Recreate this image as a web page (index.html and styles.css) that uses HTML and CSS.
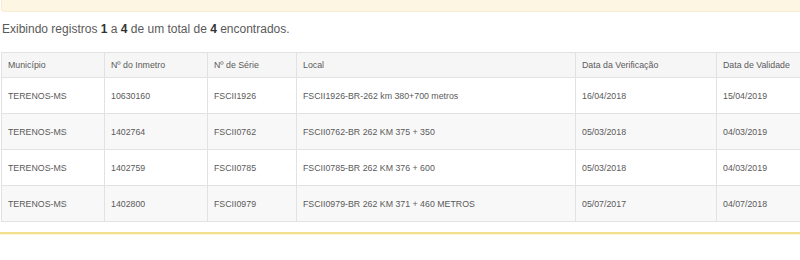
FILE: index.html
```html
<!DOCTYPE html>
<html lang="pt-BR">
<head>
<meta charset="utf-8">
<link rel="stylesheet" href="styles.css">
</head>
<body>
<div class="alert-top"></div>
<p class="summary">Exibindo registros <b>1</b> a <b>4</b> de um total de <b>4</b> encontrados.</p>
<div class="table-wrap">
<table class="grid">
<colgroup>
<col class="c1"><col class="c2"><col class="c3"><col class="c4"><col class="c5"><col class="c6">
</colgroup>
<thead>
<tr><th>Município</th><th>Nº do Inmetro</th><th>Nº de Série</th><th>Local</th><th>Data da Verificação</th><th>Data de Validade</th></tr>
</thead>
<tbody>
<tr><td>TERENOS-MS</td><td>10630160</td><td>FSCII1926</td><td>FSCII1926-BR-262 km 380+700 metros</td><td>16/04/2018</td><td>15/04/2019</td></tr>
<tr><td>TERENOS-MS</td><td>1402764</td><td>FSCII0762</td><td>FSCII0762-BR 262 KM 375 + 350</td><td>05/03/2018</td><td>04/03/2019</td></tr>
<tr><td>TERENOS-MS</td><td>1402759</td><td>FSCII0785</td><td>FSCII0785-BR 262 KM 376 + 600</td><td>05/03/2018</td><td>04/03/2019</td></tr>
<tr><td>TERENOS-MS</td><td>1402800</td><td>FSCII0979</td><td>FSCII0979-BR 262 KM 371 + 460 METROS</td><td>05/07/2017</td><td>04/07/2018</td></tr>
</tbody>
</table>
</div>
<div class="alert-bottom"></div>
</body>
</html>
```
FILE: styles.css
```css
html, body {
  margin: 0;
  padding: 0;
  background: #fff;
  overflow: hidden;
  font-family: "Liberation Sans", Arial, sans-serif;
  color: #5a5a5a;
}
.alert-top {
  height: 11px;
  background: #fdf6e2;
  border: 1px solid #f7ecd0;
  border-top: none;
  border-radius: 0 0 4px 4px;
  margin: 0 -4px 0 1px;
}
.summary {
  margin: 10px 0 0 2px;
  font-size: 12px;
  line-height: 14px;
  color: #5a5a5a;
}
.summary b { color: #333; }
.table-wrap {
  margin: 16px 0 0 1px;
  width: 830px;
}
.grid {
  border-collapse: collapse;
  table-layout: fixed;
  width: 830px;
  font-size: 8.8px;
  color: #5a5a5a;
}
.c1 { width: 103px; }
.c2 { width: 103px; }
.c3 { width: 89px; }
.c4 { width: 279px; }
.c5 { width: 141px; }
.c6 { width: 115px; }
.grid th, .grid td {
  border: 1px solid #e2e2e2;
  text-align: left;
  font-weight: normal;
  padding: 0 6px;
  white-space: nowrap;
}
.grid th {
  height: 24px;
  background: #f6f6f6;
}
.grid td { height: 35px; }
.grid tbody tr:nth-child(even) td { background: #f8f8f8; }
.alert-bottom {
  margin-top: 10px;
  height: 8px;
  border-top: 2px solid #f3e08c;
  background: #fff;
  box-shadow: inset 0 1px 0 #fbf4d8;
}
```
